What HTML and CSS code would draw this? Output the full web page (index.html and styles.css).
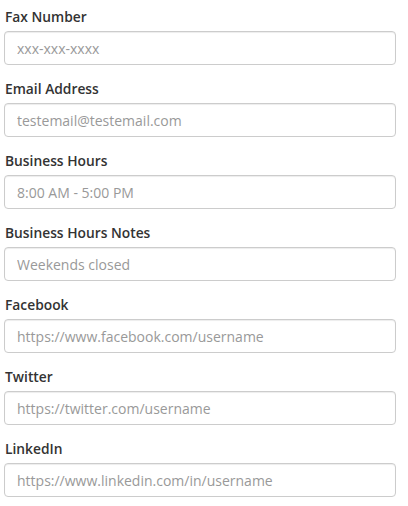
FILE: index.html
```html
<!DOCTYPE html>
<html>
<head>
<meta charset="utf-8">
<link rel="stylesheet" href="styles.css">
</head>
<body>
<form class="form">
  <div class="group">
    <label class="label">Fax Number</label>
    <input class="input" type="text" placeholder="xxx-xxx-xxxx">
  </div>
  <div class="group">
    <label class="label">Email Address</label>
    <input class="input" type="text" placeholder="testemail@testemail.com">
  </div>
  <div class="group">
    <label class="label">Business Hours</label>
    <input class="input" type="text" placeholder="8:00 AM - 5:00 PM">
  </div>
  <div class="group">
    <label class="label">Business Hours Notes</label>
    <input class="input" type="text" placeholder="Weekends closed">
  </div>
  <div class="group">
    <label class="label">Facebook</label>
    <input class="input" type="text" placeholder="https://www.facebook.com/username">
  </div>
  <div class="group">
    <label class="label">Twitter</label>
    <input class="input" type="text" placeholder="https://twitter.com/username">
  </div>
  <div class="group">
    <label class="label">LinkedIn</label>
    <input class="input" type="text" placeholder="https://www.linkedin.com/in/username">
  </div>
</form>
</body>
</html>
```
FILE: styles.css
```css
html, body {
  margin: 0;
  padding: 0;
  background: #fff;
}
body {
  font-family: "Open Sans", "Liberation Sans", sans-serif;
  color: #333;
}
.form {
  display: flex;
  flex-direction: column;
  padding: 7px 12px 0 4px;
}
.group {
  display: flex;
  flex-direction: column;
  margin-bottom: 14px;
}
.label {
  font-size: 13.8px;
  font-weight: 600;
  line-height: 20px;
  margin: 0 0 4px 1px;
  color: #333;
}
.input {
  box-sizing: border-box;
  height: 34px;
  width: 392px;
  margin: 0;
  padding: 6px 12px;
  font-family: "Open Sans", "Liberation Sans", sans-serif;
  font-size: 14px;
  color: #555;
  border: 1px solid #ccc;
  border-radius: 4px;
  background: #fff;
  box-shadow: inset 0 1px 1px rgba(0,0,0,.075);
  outline: none;
}
.input::placeholder {
  color: #999;
}
```
